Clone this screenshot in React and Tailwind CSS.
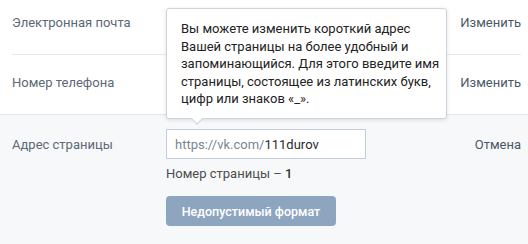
import React from "react";

export default function App() {
  return (
    <div
      className="relative w-[528px] h-[244px] overflow-hidden bg-white text-[13px] leading-[17px]"
      style={{ fontFamily: "Roboto, 'Liberation Sans', sans-serif" }}
    >
      {/* Row 1 */}
      <div className="ml-3 mr-[7px] h-[55px] pt-[14px] flex justify-between border-b border-[#e7e8ec]">
        <span className="text-[#5d6875]">Электронная почта</span>
        <span className="text-[#4a5766]">Изменить</span>
      </div>
      {/* Row 2 */}
      <div className="h-[60px] border-b border-[#e7e8ec] pl-3 pr-[7px] pt-[19px] flex justify-between">
        <span className="text-[#5d6875]">Номер телефона</span>
        <span className="text-[#4a5766]">Изменить</span>
      </div>
      {/* Row 3 */}
      <div className="bg-[#f7f8fa] h-[129px] pl-3 pr-[7px] pt-[14px] flex">
        <div className="w-[154px] h-[30px] flex items-center text-[#5d6875]">Адрес страницы</div>
        <div className="flex flex-col">
          <div className="w-[200px] h-[30px] bg-white border border-[#c5ced8] flex items-center pl-[8px] text-[13px]">
            <span className="text-[#7c8591]">https://vk.com/</span>
            <span className="text-[#2a2a2a]">111durov</span>
          </div>
          <div className="mt-[6px] text-[#4d4d4d]">
            Номер страницы – <span className="font-medium text-[#333]">1</span>
          </div>
          <button className="mt-[14px] w-[170px] h-[30px] rounded-[4px] bg-[#8ea5c0] text-white text-[12.5px] font-medium flex items-center justify-center">
            Недопустимый формат
          </button>
        </div>
        <div className="ml-auto h-[30px] flex items-center text-[#4a5766]">Отмена</div>
      </div>

      {/* Tooltip */}
      <div className="absolute left-[166px] top-[8px] w-[281px] h-[111px] bg-white border border-[#cdd4dc] rounded-[3px] shadow-[0_1px_4px_rgba(0,0,0,0.12)] pl-[14px] pt-[11px] text-[13px] leading-[17.5px] text-[#222] whitespace-nowrap">
        Вы можете изменить короткий адрес
        <br />
        Вашей страницы на более удобный и
        <br />
        запоминающийся. Для этого введите имя
        <br />
        страницы, состоящее из латинских букв,
        <br />
        цифр или знаков «_».
        <div className="absolute left-[26px] bottom-[-5px] w-[8px] h-[8px] bg-white border-r border-b border-[#cdd4dc] rotate-45" />
      </div>
    </div>
  );
}
